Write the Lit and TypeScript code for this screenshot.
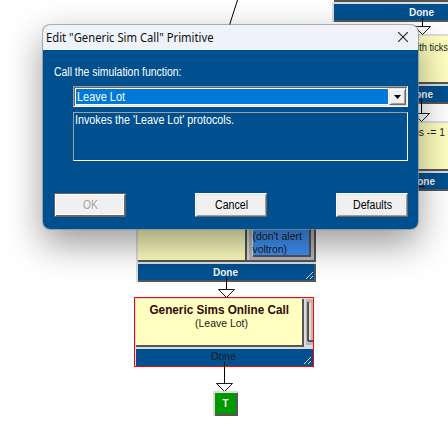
import { LitElement, html, svg, css } from "lit";
import { customElement, property } from "lit/decorators.js";

/** One line of dialog text, condensed to the width of the Windows UI face. */
@customElement("ui-label")
class UiLabel extends LitElement {
  @property() text = "";
  @property({ type: Number }) width = 0;
  @property({ type: Number }) size = 12.5;
  @property() font = "";
  static styles = css`
    :host { display: block; height: 14px; }
    svg { display: block; height: 14px; overflow: visible; }
    text { font-family: "Liberation Sans", Arial, sans-serif; fill: currentColor; }
    text.title { font-family: "Noto Sans", "Open Sans", sans-serif; }
  `;
  render() {
    return html`<svg width=${this.width} height="14">
      <text class=${this.font} x="0" y="11" font-size=${this.size}
        textLength=${this.width} lengthAdjust="spacingAndGlyphs">${this.text}</text>
    </svg>`;
  }
}

/** The behaviour-tree canvas with its nodes and connectors. */
@customElement("tree-canvas")
class TreeCanvas extends LitElement {
  static styles = css`
    :host { display: block; width: 448px; height: 436px; }
    svg { display: block; }
    text { font-family: "Liberation Sans", Arial, sans-serif; font-size: 11px; fill: #1c1c1c; }
    .done { fill: #f4f4f4; font-weight: bold; }
    .name { font-size: 12px; font-weight: bold; fill: #300808; }
    .yellow { fill: #ffffc0; }
    .blue { fill: #005090; }
    .light { fill: #dcdcdc; }
    .dark { fill: #555; }
    .grey { fill: #b8b8b8; }
    .choice { fill: #3f93f8; }
    .red { fill: #f00; }
    .green { fill: #009900; }
    .line { stroke: #000; fill: none; }
    .head { stroke: #000; fill: #fff; stroke-width: 0.9; }
    .grip { stroke: #d0dce6; fill: none; }
  `;

  private box(cls: string, x: number, y: number, w: number, h: number) {
    return svg`<rect class=${cls} x=${x} y=${y} width=${w} height=${h} shape-rendering="crispEdges"></rect>`;
  }
  private text(cls: string, x: number, y: number, w: number, s: string) {
    return svg`<text class=${cls} x=${x} y=${y} textLength=${w} lengthAdjust="spacingAndGlyphs">${s}</text>`;
  }
  private arrow(x: number, from: number, top: number) {
    return svg`<path class="line" d="M${x + 0.5} ${from}V${top}"></path>
      <path class="head" d="M${x - 7.5} ${top + 0.5}H${x + 8.5}L${x + 0.5} ${top + 8.5}Z"></path>`;
  }
  private footer(x: number, y: number, w: number) {
    return [
      this.box("light", x, y - 2, w, 20),
      this.box("dark", x + 2, y + 16, w - 2, 2),
      this.box("dark", x + w - 2, y, 2, 18),
      this.box("blue", x + 2, y, w - 4, 16),
    ];
  }
  private grip(x: number, y: number) {
    return svg`<path class="grip" d="M${x - 7} ${y}L${x} ${y - 7}M${x - 3} ${y}L${x} ${y - 3}"></path>`;
  }

  render() {
    return html`<svg width="448" height="436" viewBox="0 0 448 436">
      <path class="line" d="M237.5 0L229.5 25"></path>

      ${this.box("dark", 334, 0, 120, 2)}
      ${this.footer(332, 4, 180)}
      ${this.text("done", 409, 16, 25, "Done")}

      ${this.box("light", 332, 34, 180, 50)}
      ${this.box("yellow", 334, 36, 180, 46)}
      ${this.box("dark", 334, 82, 180, 2)}
      ${this.text("", 410.5, 51, 37.5, "with ticks")}
      ${this.footer(332, 86, 180)}
      ${this.text("done", 408, 98, 25, "Done")}

      ${this.box("light", 332, 121, 180, 50)}
      ${this.box("yellow", 334, 123, 180, 46)}
      ${this.box("dark", 334, 169, 180, 2)}
      ${this.text("", 413, 136, 32, "os -= 1")}
      ${this.footer(332, 173, 180)}
      ${this.text("done", 410, 185, 25, "Done")}
      <path class="line" d="M418 186.5H424"></path>
      ${this.arrow(422, 18, 26)}
      ${this.arrow(421, 99, 113)}

      ${this.box("light", 136, 200, 180, 62)}
      ${this.box("yellow", 138, 200, 107, 60)}
      ${this.box("dark", 245, 200, 2, 62)}
      ${this.box("dark", 138, 260, 178, 2)}
      ${this.box("grey", 249, 200, 65, 60)}
      ${this.box("dark", 314, 200, 2, 62)}
      ${this.box("light", 252, 200, 1, 56)}
      ${this.box("choice", 253, 200, 56, 55)}
      ${this.box("dark", 309, 200, 2, 57)}
      ${this.box("dark", 253, 255, 58, 2)}
      ${this.text("", 252.5, 240, 49.5, "(don't alert")}
      ${this.text("", 252.5, 253, 34.5, "voltron)")}
      ${this.footer(136, 264, 180)}
      ${this.text("done", 213, 276, 25, "Done")}
      ${this.grip(313, 279)}
      ${this.arrow(226, 277, 289)}

      ${this.box("red", 134, 297, 180, 70)}
      ${this.box("light", 135, 298, 178, 68)}
      ${this.box("yellow", 136, 299, 166, 46)}
      ${this.box("dark", 302, 299, 2, 48)}
      ${this.box("dark", 136, 345, 177, 2)}
      ${this.box("light", 304, 299, 9, 48)}
      ${this.box("grey", 306, 299, 7, 46)}
      ${this.box("dark", 307, 302, 2, 39)}
      ${this.box("light", 309, 303, 2, 38)}
      ${this.box("dark", 308, 340, 5, 2)}
      ${this.box("blue", 136, 349, 177, 17)}
      ${this.text("name", 149.5, 314, 139.5, "Generic Sims Online Call")}
      ${this.text("", 195, 327, 53, "(Leave Lot)")}
      ${this.text("", 211, 360, 25, "Done")}
      ${this.grip(311, 364)}
      ${this.arrow(224, 362, 383)}

      ${this.box("light", 213, 391, 25, 25)}
      ${this.box("dark", 215, 393, 23, 23)}
      ${this.box("green", 215, 393, 21, 21)}
      ${this.text("done", 222.5, 407, 6, "T")}
    </svg>`;
  }
}

@customElement("app-root")
class AppRoot extends LitElement {
  static styles = css`
    :host { display: block; position: relative; width: 448px; height: 436px; overflow: hidden; background: #fff; }
    .dialog {
      position: absolute; left: 42px; top: 24px; width: 377px; height: 206px;
      box-sizing: border-box; border: 1px solid rgba(130, 140, 150, 0.65); border-radius: 8px;
      background: #005090; background-clip: padding-box; color: #fff; overflow: hidden;
      display: flex; flex-direction: column;
      box-shadow: 0 14px 36px rgba(0, 0, 0, 0.4);
    }
    .bar {
      flex: none; height: 25px; box-sizing: border-box; padding: 6px 10px 0 3px;
      display: flex; justify-content: space-between; align-items: flex-start;
      background: linear-gradient(90deg, #eef3f9, #f1f1f9); color: #111;
    }
    .close { display: block; margin-top: 1px; }
    .close path { stroke: #222; stroke-width: 1.1; }
    .body { flex: 1; padding: 15px 10px 0 11px; display: flex; flex-direction: column; }
    .prompt { margin-bottom: 7px; }
    .combo {
      margin-left: 19px; height: 21px; box-sizing: border-box; display: flex;
      border: 1px solid; border-color: #a0a0a0 #fff #fff #a0a0a0;
      background: #fff; box-shadow: inset 1px 1px #696969, inset -1px -1px #e3e3e3;
    }
    .value { flex: 1; margin: 2px 0 2px 2px; padding: 1px 0 0 1px; background: #0078d7; }
    .drop {
      width: 17px; box-sizing: border-box; margin: 1px; background: #f0f0f0;
      border: 1px solid; border-color: #e3e3e3 #696969 #696969 #e3e3e3;
      box-shadow: inset 1px 1px #fff, inset -1px -1px #a0a0a0;
      display: flex; align-items: center; justify-content: center;
    }
    .info {
      margin: 5px 0 0 19px; height: 49px; box-sizing: border-box; padding: 0 1px;
      border: 1px solid; border-color: #a0a0a0 #fff #fff #a0a0a0;
    }
    .buttons { display: flex; justify-content: space-between; margin-top: 32px; }
    .button {
      width: 72px; height: 24px; box-sizing: border-box; background: #f0f0f0; color: #000;
      border: 1px solid; border-color: #fff #696969 #696969 #fff;
      box-shadow: inset 1px 1px #e3e3e3, inset -1px -1px #a0a0a0;
      display: flex; justify-content: center; padding-top: 4px;
    }
    .button.off {
      color: #a0a0a0; border-color: #646464; text-shadow: 1px 1px #fff;
      box-shadow: inset 1px 1px #fff, inset -1px -1px #696969, inset -2px -2px #fff;
    }
  `;

  render() {
    return html`
      <tree-canvas></tree-canvas>
      <div class="dialog">
        <div class="bar">
          <ui-label font="title" size="12" width="167.5" .text=${'Edit "Generic Sim Call" Primitive'}></ui-label>
          <svg class="close" width="10" height="10"><path d="M0 0L10 10M10 0L0 10"></path></svg>
        </div>
        <div class="body">
          <ui-label class="prompt" width="127.5" text="Call the simulation function:"></ui-label>
          <div class="combo">
            <div class="value"><ui-label width="48" text="Leave Lot"></ui-label></div>
            <div class="drop"><svg width="7" height="4"><path d="M0 0H7L3.5 4Z"></path></svg></div>
          </div>
          <div class="info"><ui-label width="159" text="Invokes the 'Leave Lot' protocols."></ui-label></div>
          <div class="buttons">
            <div class="button off"><ui-label width="15" text="OK"></ui-label></div>
            <div class="button"><ui-label width="33" text="Cancel"></ui-label></div>
            <div class="button"><ui-label width="39" text="Defaults"></ui-label></div>
          </div>
        </div>
      </div>
    `;
  }
}
